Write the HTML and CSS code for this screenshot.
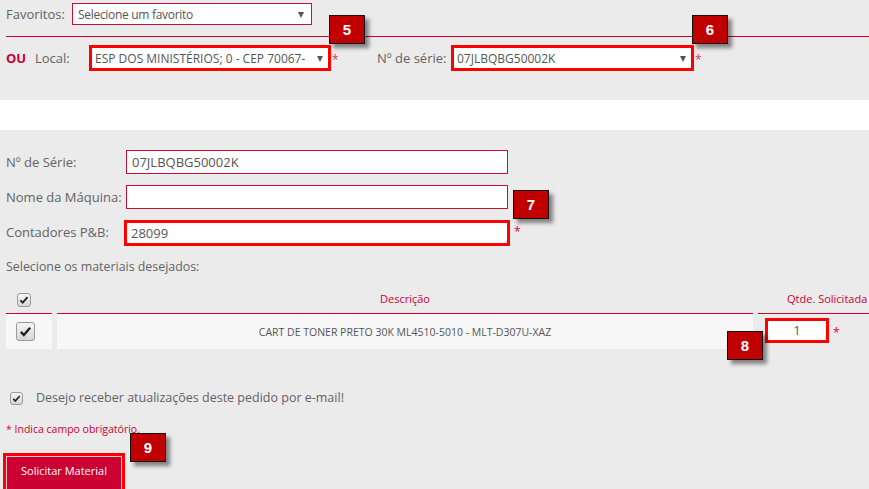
FILE: index.html
```html
<!DOCTYPE html>
<html lang="pt-BR">
<head>
<meta charset="utf-8">
<title>Solicitar Material</title>
<link rel="stylesheet" href="styles.css">
</head>
<body>
<div class="page">
  <section class="top">
    <div class="fav-row">
      <span class="label fav-label">Favoritos:</span>
      <div class="select fav-select"><span class="sel-text">Selecione um favorito</span><i class="arrow"></i></div>
    </div>
    <div class="rule"></div>
    <div class="filter-row">
      <span class="ou">OU</span>
      <span class="label local-label">Local:</span>
      <div class="select hl local-select"><span class="sel-text">ESP DOS MINISTÉRIOS; 0 - CEP 70067-</span><i class="arrow"></i></div>
      <span class="req">*</span>
      <span class="label serie-label">Nº de série:</span>
      <div class="select hl serie-select"><span class="sel-text">07JLBQBG50002K</span><i class="arrow"></i></div>
      <span class="req">*</span>
    </div>
  </section>
  <div class="band"></div>
  <section class="main">
    <div class="form-row">
      <span class="label form-label">Nº de Série:</span>
      <div class="input">07JLBQBG50002K</div>
    </div>
    <div class="form-row">
      <span class="label form-label">Nome da Máquina:</span>
      <div class="input"></div>
    </div>
    <div class="form-row">
      <span class="label form-label">Contadores P&amp;B:</span>
      <div class="input hl-input">28099</div>
      <span class="req req-input">*</span>
    </div>
    <p class="label materials">Selecione os materiais desejados:</p>
    <div class="table">
      <div class="th th-check"><span class="cb cb-small"><svg viewBox="0 0 14 14" width="10" height="10"><path d="M2 7.5 L5.2 10.8 L12 3" fill="none" stroke="#222" stroke-width="2.6"/></svg></span></div>
      <div class="th th-desc">Descrição</div>
      <div class="th th-qty">Qtde. Solicitada</div>
      <div class="td td-check"><span class="cb cb-big"><svg viewBox="0 0 14 14" width="13" height="13"><path d="M2 7.5 L5.2 10.8 L12 3" fill="none" stroke="#222" stroke-width="2.6"/></svg></span></div>
      <div class="td td-desc">CART DE TONER PRETO 30K ML4510-5010 - MLT-D307U-XAZ</div>
      <div class="td td-qty"><div class="qty">1</div><span class="req">*</span></div>
    </div>
    <div class="email-row">
      <span class="cb cb-email"><svg viewBox="0 0 14 14" width="9" height="9"><path d="M2 7.5 L5.2 10.8 L12 3" fill="none" stroke="#222" stroke-width="2.6"/></svg></span>
      <span class="email-text">Desejo receber atualizações deste pedido por e-mail!</span>
    </div>
    <p class="required-note"><span class="req">*</span> Indica campo obrigatório.</p>
    <div class="btn-wrap"><div class="btn" role="button">Solicitar Material</div></div>
  </section>

  <span class="badge b5">5</span>
  <span class="badge b6">6</span>
  <span class="badge b7">7</span>
  <span class="badge b8">8</span>
  <span class="badge b9">9</span>
</div>
</body>
</html>
```

FILE: styles.css
```css
* { box-sizing: border-box; }
html, body { margin: 0; padding: 0; }
body {
  background: #ebebeb;
  font-family: "Open Sans", "Liberation Sans", sans-serif;
  color: #5e5e5e;
  width: 869px;
  height: 489px;
  overflow: hidden;
}
.page { position: relative; width: 869px; height: 489px; overflow: hidden; }

.label { font-size: 13px; color: #636363; white-space: nowrap; }

/* top */
.top { height: 100px; padding-left: 6px; }
.fav-row { display: flex; align-items: center; padding-top: 3px; height: 25px; }
.fav-label { width: 66px; }
.select {
  position: relative;
  display: flex;
  align-items: center;
  background: #fff;
  border: 1px solid #c5103a;
  font-size: 12px;
  color: #555;
  padding-left: 5px;
  white-space: nowrap;
  overflow: hidden;
}
.fav-select { width: 240px; height: 22px; }
.fav-select .sel-text { letter-spacing: -0.3px; }
.arrow {
  position: absolute;
  right: 7px;
  top: 50%;
  margin-top: -2px;
  width: 0; height: 0;
  border-left: 3.5px solid transparent;
  border-right: 3.5px solid transparent;
  border-top: 6px solid #555;
}
.rule { height: 1px; background: #cc0033; margin-top: 11px; }
.filter-row { display: flex; align-items: center; margin-top: 8px; height: 26px; }
.ou { width: 29px; color: #cc0033; font-weight: 700; font-size: 13px; }
.local-label { width: 54px; }
.hl { border: 3px solid #ff0000; height: 26px; padding-left: 3px; }
.hl .arrow { right: 5px; }
.local-select { width: 242px; }
.serie-select { width: 243px; }
.req { color: #e8003a; font-size: 12px; }
.filter-row .req { width: 6px; margin-left: 1px; margin-top: 2px; color: #f0304a; }
.serie-label { width: 74px; margin-left: 39px; }

.band { height: 30px; background: #fff; }

/* main */
.main { padding: 20px 0 0 6px; }
.form-row { display: flex; align-items: center; height: 24px; margin-bottom: 11px; }
.form-label { width: 120px; }
.input {
  width: 382px;
  height: 24px;
  border: 1px solid #c5103a;
  background: #fff;
  font-size: 13px;
  color: #555;
  padding-left: 5px;
  line-height: 22px;
}
.hl-input {
  width: 386px;
  height: 26px;
  margin-left: -2px;
  margin-top: 2px;
  border: 3px solid #ff0000;
  padding-left: 4px;
  line-height: 20px;
}
.req-input { margin-left: 4px; margin-top: -2px; }
.materials { margin: 0; padding-top: 3px; height: 31px; line-height: 18px; font-size: 12.4px; }

.table {
  display: grid;
  grid-template-columns: 46px 696px 135px;
  column-gap: 5px;
}
.th {
  height: 28px;
  display: flex;
  align-items: center;
  font-size: 11px;
  color: #cc0033;
  border-bottom: 1px solid #cc0033;
  padding-bottom: 2px;
}
.th-check { padding-left: 11px; padding-top: 2px; }
.th-desc { justify-content: center; }
.th-qty { padding-left: 29px; }
.td {
  height: 35px;
  display: flex;
  align-items: center;
  background: #f7f7f7;
}
.td-check { padding-left: 10px; }
.td-desc { justify-content: center; font-size: 10.5px; color: #555; padding-top: 1px; }
.td-qty { background: transparent; padding-left: 7px; align-items: flex-start; padding-top: 4px; }

.cb {
  display: inline-flex;
  align-items: center;
  justify-content: center;
  border: 1px solid #9a9a9a;
  border-radius: 3px;
  background: linear-gradient(#f6f6f6, #d6d6d6);
}
.cb-small { width: 14px; height: 14px; }
.cb-big { width: 19px; height: 19px; }
.cb-email { width: 13px; height: 13px; }

.qty {
  width: 64px;
  height: 25px;
  border: 3px solid #ff0000;
  background: #fff;
  text-align: center;
  font-size: 13px;
  line-height: 19px;
  color: #5a5a5a;
}
.td-qty .req { margin-left: 4px; margin-top: 6px; }

.email-row { display: flex; align-items: center; margin-top: 42px; padding-left: 4px; height: 14px; }
.email-text { margin-left: 13px; font-size: 12.5px; color: #636363; margin-top: -2px; }

.required-note { margin: 17px 0 0; font-size: 10.5px; color: #cc0033; line-height: 14px; }
.required-note .req { font-size: 10.5px; }

.btn-wrap {
  margin-top: 17px;
  margin-left: -3px;
  width: 122px;
  height: 40px;
  border: 3px solid #ff0000;
  border-bottom: 0;
}
.btn {
  width: 116px;
  height: 40px;
  background: #cc0033;
  border: 1px solid #f0c8d2;
  color: #fff;
  font-size: 11px;
  line-height: 16px;
  padding-top: 6px;
  text-align: center;
}

/* annotation badges */
.badge {
  position: absolute;
  width: 36px;
  height: 29px;
  background: #c00000;
  border: 1px solid #111;
  color: #fff;
  font-family: "Liberation Sans", Arial, sans-serif;
  font-weight: 700;
  font-size: 15px;
  display: flex;
  align-items: center;
  justify-content: center;
  box-shadow: 4px 4px 4px rgba(0, 0, 0, 0.45);
}
.b5 { left: 329px; top: 15px; }
.b6 { left: 692px; top: 15px; }
.b7 { left: 513px; top: 190px; }
.b8 { left: 727px; top: 331px; }
.b9 { left: 130px; top: 433px; }
```
